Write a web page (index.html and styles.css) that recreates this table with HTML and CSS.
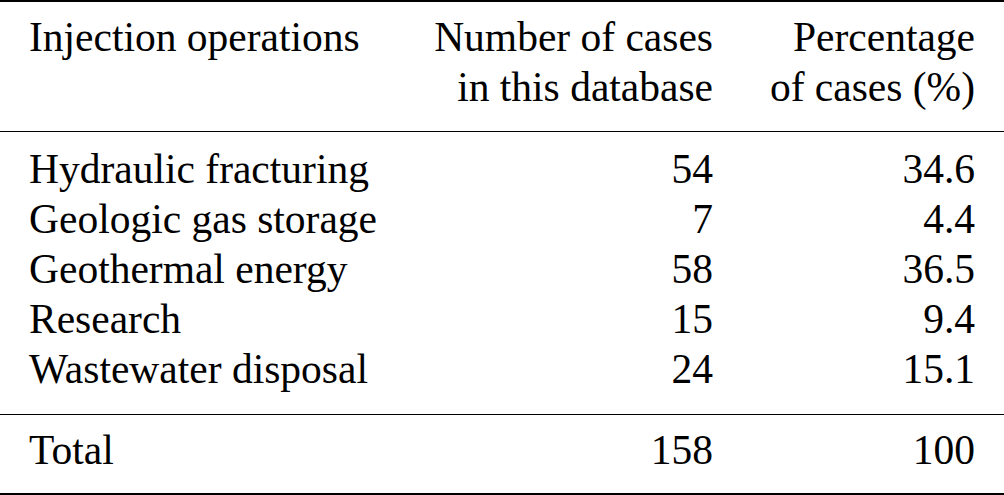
FILE: index.html
```html
<!DOCTYPE html>
<html lang="en">
<head>
    <meta charset="UTF-8">
    <meta name="viewport" content="width=device-width, initial-scale=1.0">
    <title>Injection operations</title>
    <link rel="stylesheet" href="styles.css">
</head>
<body>
    <table class="cases">
        <thead>
            <tr>
                <th class="name">Injection operations</th>
                <th class="num">Number of cases<br>in this database</th>
                <th class="pct">Percentage<br>of cases (%)</th>
            </tr>
        </thead>
        <tbody>
            <tr>
                <td class="name">Hydraulic fracturing</td>
                <td class="num">54</td>
                <td class="pct">34.6</td>
            </tr>
            <tr>
                <td class="name">Geologic gas storage</td>
                <td class="num">7</td>
                <td class="pct">4.4</td>
            </tr>
            <tr>
                <td class="name">Geothermal energy</td>
                <td class="num">58</td>
                <td class="pct">36.5</td>
            </tr>
            <tr>
                <td class="name">Research</td>
                <td class="num">15</td>
                <td class="pct">9.4</td>
            </tr>
            <tr>
                <td class="name">Wastewater disposal</td>
                <td class="num">24</td>
                <td class="pct">15.1</td>
            </tr>
        </tbody>
        <tfoot>
            <tr>
                <td class="name">Total</td>
                <td class="num">158</td>
                <td class="pct">100</td>
            </tr>
        </tfoot>
    </table>
</body>
</html>
```

FILE: styles.css
```css
* { margin: 0; padding: 0; box-sizing: border-box; }
body {
    background: #fff;
}
.cases {
    width: 1004px;
    table-layout: fixed;
    border-collapse: collapse;
    font-family: "Liberation Serif", "Times New Roman", serif;
    font-size: 41.5px;
    line-height: 50px;
    color: #000;
    border-top: 2px solid #000;
    border-bottom: 2px solid #000;
}
.cases th,
.cases td {
    font-weight: normal;
    vertical-align: top;
    white-space: nowrap;
    padding: 0;
}
.cases .name {
    width: 400px;
    text-align: left;
    padding-left: 29px;
}
.cases .num {
    width: 313px;
    text-align: right;
}
.cases .pct {
    width: 291px;
    text-align: right;
    padding-right: 29px;
}
.cases thead th {
    padding-top: 10px;
    padding-bottom: 19px;
}
.cases thead {
    border-bottom: 1px solid #000;
}
.cases tbody tr:first-child td {
    padding-top: 12px;
}
.cases tbody tr:last-child td {
    padding-bottom: 20px;
}
.cases tfoot {
    border-top: 1px solid #000;
}
.cases tfoot td {
    padding-top: 10px;
    padding-bottom: 18px;
}
```
